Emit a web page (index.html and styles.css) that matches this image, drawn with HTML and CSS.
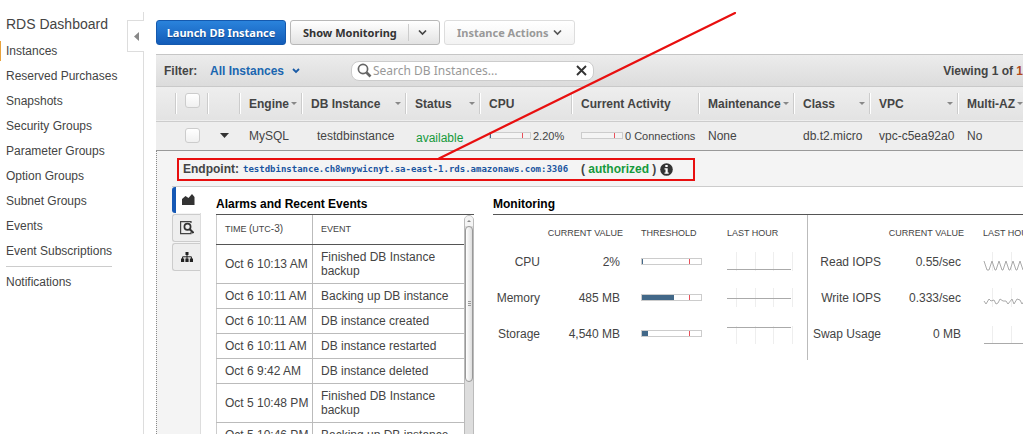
FILE: index.html
```html
<!DOCTYPE html>
<html lang="en">
<head>
<meta charset="utf-8">
<title>RDS Dashboard</title>
<link rel="stylesheet" href="styles.css">
</head>
<body>
<div class="app">
  <aside class="sidebar">
    <nav class="nav">
      <h1 class="nav-title">RDS Dashboard</h1>
      <a class="nav-link active" href="#">Instances</a>
      <a class="nav-link" href="#">Reserved Purchases</a>
      <a class="nav-link" href="#">Snapshots</a>
      <a class="nav-link" href="#">Security Groups</a>
      <a class="nav-link" href="#">Parameter Groups</a>
      <a class="nav-link" href="#">Option Groups</a>
      <a class="nav-link" href="#">Subnet Groups</a>
      <a class="nav-link" href="#">Events</a>
      <a class="nav-link" href="#">Event Subscriptions</a>
      <hr class="nav-rule">
      <a class="nav-link" href="#">Notifications</a>
    </nav>
    <div class="rail">
      <button class="collapse" type="button" aria-label="Collapse navigation"><svg width="5" height="9" viewBox="0 0 5 9"><path d="M5 0v9L0 4.500z" fill="#888"/></svg></button>
    </div>
  </aside>

  <main class="main">
    <div class="toolbar">
      <button class="btn primary" type="button">Launch DB Instance</button>
      <button class="btn split" type="button"><span>Show Monitoring</span><span class="split-arrow"><svg width="9" height="7" viewBox="0 0 9 7"><path d="M1 1.500l3.500 3.500L8 1.500" fill="none" stroke="#444" stroke-width="1.700"/></svg></span></button>
      <button class="btn disabled" type="button" disabled><span>Instance Actions</span><svg width="9" height="7" viewBox="0 0 9 7"><path d="M1 1.500l3.500 3.500L8 1.500" fill="none" stroke="#555" stroke-width="1.700"/></svg></button>
    </div>

    <div class="filterbar">
      <label class="filter-label" for="filter">Filter:</label>
      <div class="filter-pick">
        <select id="filter" class="filter-select"><option>All Instances</option></select>
        <svg width="8" height="6" viewBox="0 0 8 6"><path d="M1 1l3 3L7 1" fill="none" stroke="#1a5ba6" stroke-width="1.800"/></svg>
      </div>
      <div class="search">
        <svg width="15" height="15" viewBox="0 0 15 15"><circle cx="6" cy="6" r="4.600" fill="none" stroke="#666" stroke-width="1.700"/><path d="M9.500 9.500l4 4" stroke="#666" stroke-width="2.600"/></svg>
        <input class="search-input" type="text" placeholder="Search DB Instances..." aria-label="Search DB Instances">
        <button class="clear" type="button" aria-label="Clear search"><svg width="11" height="11" viewBox="0 0 11 11"><path d="M1 1l9 9M10 1l-9 9" stroke="#333" stroke-width="1.900"/></svg></button>
      </div>
      <div class="viewing">Viewing 1 of <span class="viewing-total">1</span></div>
    </div>

    <table class="grid">
      <colgroup><col class="w-edge"><col class="w-icon"><col class="w-icon"><col class="w-engine"><col class="w-name"><col class="w-status"><col class="w-cpu"><col class="w-activity"><col class="w-maint"><col class="w-class"><col class="w-vpc"><col class="w-az"></colgroup>
      <thead>
        <tr>
          <th><div class="head"></div></th>
          <th><div class="head tick"><input class="check" type="checkbox" aria-label="Select all"></div></th>
          <th><div class="head"></div></th>
          <th><div class="head">Engine<i class="sort"></i></div></th>
          <th><div class="head">DB Instance<i class="sort"></i></div></th>
          <th><div class="head">Status<i class="sort"></i></div></th>
          <th><div class="head">CPU</div></th>
          <th><div class="head">Current Activity</div></th>
          <th><div class="head">Maintenance<i class="sort"></i></div></th>
          <th><div class="head">Class<i class="sort"></i></div></th>
          <th><div class="head">VPC<i class="sort"></i></div></th>
          <th><div class="head last">Multi-AZ<i class="sort"></i></div></th>
        </tr>
      </thead>
      <tbody>
        <tr>
          <td></td>
          <td><input class="check" type="checkbox" aria-label="Select testdbinstance"></td>
          <td><button class="expand" type="button" aria-label="Toggle details"><svg width="9" height="5" viewBox="0 0 9 5"><path d="M0 0h9L4.500 5z" fill="#333"/></svg></button></td>
          <td>MySQL</td>
          <td class="name">testdbinstance</td>
          <td class="status">available</td>
          <td><div class="usage"><span class="meter small"><i class="fill" style="width:2%"></i></span><span>2.20%</span></div></td>
          <td><div class="usage"><span class="meter small"></span><span>0 Connections</span></div></td>
          <td>None</td>
          <td>db.t2.micro</td>
          <td>vpc-c5ea92a0</td>
          <td>No</td>
        </tr>
      </tbody>
    </table>

    <section class="detail">
      <div class="endpoint-row">
        <div class="endpoint">
          <b>Endpoint:</b>
          <code class="host">testdbinstance.ch8wnywicnyt.sa-east-1.rds.amazonaws.com:3306</code>
          <b class="auth">( <span class="green">authorized</span> )</b>
          <svg class="info" width="13" height="13" viewBox="0 0 13 13"><circle cx="6.500" cy="6.500" r="6.300" fill="#333"/><path d="M5.300 2h2.400v2H5.300zM4.500 5.200h3.200v4.300h1v1.300H4.500V9.500h1V6.500h-1z" fill="#fff"/></svg>
        </div>
      </div>
      <div class="detail-body">
        <div class="tabs">
          <button class="tab on" type="button" aria-label="Monitoring"><svg width="13" height="12" viewBox="0 0 13 12"><path d="M0 11V5l3.500-3 3 2L10 0l2.500 3v8z" fill="#333"/></svg></button>
          <button class="tab" type="button" aria-label="Details"><svg width="14" height="14" viewBox="0 0 14 14"><path d="M11 2V.600H.600v12H11V11" fill="none" stroke="#444" stroke-width="1.200"/><circle cx="7.500" cy="5.700" r="3.100" fill="none" stroke="#333" stroke-width="1.700"/><path d="M9.500 8l4 4" stroke="#333" stroke-width="2"/></svg></button>
          <button class="tab" type="button" aria-label="Topology"><svg width="12" height="10" viewBox="0 0 12 10"><path d="M4.500 0h3v3h-3zM0 6.500h3.200V10H0zM4.400 6.500h3.200V10H4.400zM8.800 6.500H12V10H8.800z" fill="#222"/><path d="M6 2v5M1.600 7V4.800h8.800V7" fill="none" stroke="#222"/></svg></button>
        </div>
        <div class="panel">
          <section class="events">
            <h2 class="heading">Alarms and Recent Events</h2>
            <div class="events-box">
              <table class="events-table">
                <colgroup><col class="w-time"><col></colgroup>
                <thead><tr><th>TIME <span class="utc">(</span>UTC<span class="utc">-3)</span></th><th>EVENT</th></tr></thead>
                <tbody>
                  <tr><td>Oct 6 10:13 AM</td><td>Finished DB Instance backup</td></tr>
                  <tr><td>Oct 6 10:11 AM</td><td>Backing up DB instance</td></tr>
                  <tr><td>Oct 6 10:11 AM</td><td>DB instance created</td></tr>
                  <tr><td>Oct 6 10:11 AM</td><td>DB instance restarted</td></tr>
                  <tr><td>Oct 6 9:42 AM</td><td>DB instance deleted</td></tr>
                  <tr><td>Oct 5 10:48 PM</td><td>Finished DB Instance backup</td></tr>
                  <tr><td>Oct 5 10:46 PM</td><td>Backing up DB instance</td></tr>
                </tbody>
              </table>
              <div class="scroll"><div class="scroll-up"><i></i></div><div class="thumb"><i></i><i></i><i></i></div></div>
            </div>
          </section>

          <section class="monitoring">
            <h2 class="heading">Monitoring</h2>
            <div class="metrics">
              <table class="metric-table first">
                <colgroup><col class="w-label"><col class="w-value"><col class="w-threshold"><col></colgroup>
                <thead><tr><th></th><th class="right">CURRENT VALUE</th><th class="threshold">THRESHOLD</th><th>LAST HOUR</th></tr></thead>
                <tbody>
                  <tr><td class="right">CPU</td><td class="right value">2%</td><td class="threshold"><span class="meter"><i class="fill" style="width:2%"></i></span></td>
                    <td><svg class="spark" width="67" height="20" viewBox="0 0 67 20"><path class="ticks" d="M9.500 0v19M28.500 0v19M46.500 0v19M65.500 0v19"/><path class="plot" d="M0 17.500h64"/></svg></td></tr>
                  <tr><td class="right">Memory</td><td class="right value">485 MB</td><td class="threshold"><span class="meter"><i class="fill" style="width:54%"></i></span></td>
                    <td><svg class="spark" width="67" height="20" viewBox="0 0 67 20"><path class="ticks" d="M9.500 0v19M28.500 0v19M46.500 0v19M65.500 0v19"/><path class="plot" d="M0 10.500h64"/></svg></td></tr>
                  <tr><td class="right">Storage</td><td class="right value">4,540 MB</td><td class="threshold"><span class="meter"><i class="fill" style="width:10%"></i></span></td>
                    <td><svg class="spark" width="67" height="20" viewBox="0 0 67 20"><path class="ticks" d="M9.500 2v18M28.500 2v18M46.500 2v18M65.500 2v18"/><path class="plot" d="M0 3.500h64"/></svg></td></tr>
                </tbody>
              </table>
              <table class="metric-table second">
                <colgroup><col class="w-label2"><col class="w-value"><col></colgroup>
                <thead><tr><th></th><th class="right">CURRENT VALUE</th><th class="hour">LAST HOUR</th></tr></thead>
                <tbody>
                  <tr><td class="right">Read IOPS</td><td class="right value">0.55/sec</td>
                    <td class="hour"><svg class="spark" width="67" height="20" viewBox="0 0 67 20"><path class="ticks" d="M9.500 0v19M28.500 0v19M46.500 0v19M65.500 0v19"/><path class="plot" d="M1 9l3 9h2l3-9 3 9h1l3-9 3 9h1l3-9 3 9h1l3-9 3 9h1l3-9 3 9h1l3-9 3 9h1l3-9 3 9h1l3-9 3 9"/></svg></td></tr>
                  <tr><td class="right">Write IOPS</td><td class="right value">0.333/sec</td>
                    <td class="hour"><svg class="spark" width="67" height="20" viewBox="0 0 67 20"><path class="ticks" d="M9.500 0v19M28.500 0v19M46.500 0v19M65.500 0v19"/><path class="plot" d="M1 13l2 3 3-5 2 2 3-1 2 4 2-1 2-4 3 2h3l2 3 4-5 2 5 3-5 3 1 2 4 3-4 3 2 3-1 2 3 3-4"/></svg></td></tr>
                  <tr><td class="right">Swap Usage</td><td class="right value">0 MB</td>
                    <td class="hour"><svg class="spark" width="67" height="20" viewBox="0 0 67 20"><path class="ticks" d="M9.500 2v17M28.500 2v17M46.500 2v17M65.500 2v17"/><path class="plot" d="M1 19.500h64"/></svg></td></tr>
                </tbody>
              </table>
            </div>
          </section>
        </div>
      </div>
    </section>

    <svg class="callout" width="300" height="148" viewBox="0 0 300 148"><path d="M298 1L2 146.500" stroke="#e80f0f" stroke-width="2.200" stroke-linecap="round"/></svg>
  </main>
</div>
</body>
</html>
```
FILE: styles.css
```css
* { box-sizing: border-box; }

body {
  margin: 0;
  background: #fff;
  color: #444;
  font: 12px/14px "Liberation Sans", Arial, sans-serif;
}

button { margin: 0; padding: 0; border: 0; background: none; font: inherit; color: inherit; }
svg { display: block; flex: none; }
table { border-collapse: collapse; border-spacing: 0; }
th, td { padding: 0; text-align: left; }

.app { display: flex; height: 100vh; overflow: hidden; }

/* Sidebar */
.sidebar { display: flex; flex: none; width: 144px; }
.nav { display: flex; flex: 1; flex-direction: column; padding-top: 14px; }
.nav-title { margin: 0 0 7px; padding-left: 6px; font-size: 14px; font-weight: 400; line-height: 20px; white-space: nowrap; }
.nav-link { margin-bottom: 5px; padding-left: 5px; border-left: 1px solid transparent; color: #444; line-height: 20px; text-decoration: none; white-space: nowrap; }
.nav-link.active { border-left-color: #e8a33d; }
.nav-rule { width: 106px; margin: 0 0 5px 6px; border: 0; border-top: 1px solid #ccc; }
.rail { display: flex; flex: none; flex-direction: column; width: 17px; padding-top: 12px; }
.rail::before { content: ""; height: 8px; border-right: 1px solid #ddd; }
.rail::after { content: ""; flex: 1; border-right: 1px solid #ddd; }
.collapse { display: flex; align-items: center; justify-content: center; height: 32px; border: 1px solid #ddd; border-right: 0; }

/* Main column */
.main { position: relative; display: flex; flex: 1; flex-direction: column; min-width: 0; margin-left: 12px; padding-top: 20px; overflow: hidden; }

.toolbar { display: flex; gap: 4px; }
.btn { display: flex; align-items: center; height: 25px; border: 1px solid #b8b8b8; border-radius: 3px; background: linear-gradient(#fff, #e3e3e3); color: #333; font: bold 11px/16px "Noto Sans", "Open Sans", sans-serif; white-space: nowrap; }
.btn.primary { justify-content: center; width: 130px; border-color: #1459ae; background: linear-gradient(#2a83dc, #135cb8); color: #fff; text-shadow: 0 1px 1px #0b4388; }
.btn.split { justify-content: space-between; width: 150px; padding-left: 12px; }
.split-arrow { display: flex; align-items: center; justify-content: center; width: 31px; height: 17px; padding-right: 4px; border-left: 1px solid #ccc; }
.btn.disabled { justify-content: space-between; width: 131px; padding: 0 12px; border-color: #ddd; background: linear-gradient(#fff, #f3f3f3); color: #999; }

.filterbar { display: flex; flex: none; align-items: center; height: 33px; margin-top: 9px; padding-left: 8px; border-top: 1px solid #c6c6c6; border-bottom: 1px solid #c9c9c9; background: linear-gradient(#ececec, #dcdcdc); white-space: nowrap; }
.filter-label { width: 46px; font-weight: 700; }
.filter-pick { display: flex; align-items: center; gap: 4px; width: 141px; color: #1a66b0; }
.filter-select { width: 78px; padding: 0; border: 0; background: none; color: inherit; font: bold 12px/16px "Liberation Sans", Arial, sans-serif; appearance: none; }
.search { display: flex; align-items: center; gap: 1px; width: 243px; height: 20px; padding: 0 6px 0 5px; border: 1px solid #ccc; border-radius: 8px; background: #fff; }
.search-input { flex: 1; min-width: 0; padding: 0; border: 0; outline: 0; background: none; color: #333; font: 12px/16px "Noto Sans", "Open Sans", sans-serif; }
.search-input::placeholder { color: #999; }
.viewing { flex: 1; min-width: 74px; text-align: right; font-weight: 700; }
.viewing-total { color: #b04a1c; }

/* Instance grid */
.grid { width: 969px; flex: none; align-self: flex-start; table-layout: fixed; white-space: nowrap; }
.w-edge { width: 21px; }
.w-icon { width: 32px; }
.w-engine { width: 62px; }
.w-name { width: 104px; }
.w-status { width: 74px; }
.w-cpu { width: 92px; }
.w-activity { width: 127px; }
.w-maint { width: 95px; }
.w-class { width: 76px; }
.w-vpc { width: 88px; }
.grid thead tr { height: 34px; border-bottom: 1px solid #ccc; background: linear-gradient(#eee, #e3e3e3); }
.head { display: flex; align-items: center; justify-content: space-between; height: 21px; padding: 0 5px 0 8px; border-right: 1px solid #fff; box-shadow: inset -1px 0 #ccc; }
.head.tick { justify-content: center; padding: 0; align-items: flex-start; }
.head.last { justify-content: flex-start; gap: 2px; }
.sort { border: 3px solid transparent; border-top-color: #888; border-bottom: 0; }
.check { display: block; width: 15px; height: 15px; margin: 0; border: 1px solid #ccc; border-radius: 3px; background: linear-gradient(#fff, #f0f0f0); appearance: none; }
.grid tbody tr { height: 29px; border-bottom: 1px solid #999; background: #eee; }
.grid td { padding-left: 8px; }
.grid .expand { display: block; padding: 3px; }
.grid .name { padding-left: 14px; }
.grid .status { padding: 5px 0 0 9px; color: #169a3c; }
.usage { display: flex; align-items: center; gap: 2px; font-size: 11px; }

.meter { position: relative; display: block; width: 61px; height: 7px; border: 1px solid #ccc; background: #fff; }
.meter::after { content: ""; position: absolute; top: 0; right: 11px; bottom: 0; width: 1px; background: #e8505a; }
.meter.small { width: 42px; background: #f4f4f4; }
.meter.small::after { right: 7px; }
.fill { display: block; min-width: 1px; height: 100%; background: #426888; }

/* Detail */
.detail { display: flex; flex: 1; flex-direction: column; min-height: 0; border-left: 1px dotted #888; background: #f4f4f4; }
.endpoint-row { flex: none; height: 36px; margin-left: 15px; padding: 7px 0 0 5px; border-bottom: 1px solid #ccc; }
.endpoint { display: flex; align-items: center; width: 518px; height: 23px; padding-left: 4px; border: 2px solid #e80f0f; white-space: nowrap; }
.host { width: 338px; margin-left: 4px; color: #1b55a0; font: bold 9px/14px "DejaVu Sans Mono", monospace; }
.green { color: #169a3c; }
.info { margin-left: 4px; }

.detail-body { display: flex; flex: 1; min-height: 0; padding-left: 15px; }
.tabs { display: flex; flex: none; flex-direction: column; gap: 1px; width: 29px; border-right: 1px solid #ddd; }
.tab { display: flex; align-items: center; justify-content: center; height: 28px; border: 1px solid #ccc; border-right: 0; border-radius: 3px 0 0 3px; background: #eee; }
.tab.on { height: 26px; margin-right: -1px; border: 0; border-left: 4px solid #1558b5; background: #fff; }

.panel { display: flex; flex: 1; gap: 19px; min-width: 0; padding: 10px 0 0 15px; background: #fff; }
.heading { margin: 0; padding-bottom: 3px; border-bottom: 1px solid #555; color: #000; font-size: 12px; line-height: 14px; }
.events { flex: none; width: 258px; }
.events-box { display: flex; }
.events-table { flex: 1; width: 248px; border-left: 1px solid #ccc; table-layout: fixed; }
.w-time { width: 96px; }
.events-table th { height: 30px; padding: 0 8px; border-bottom: 1px solid #555; font-size: 9px; font-weight: 400; }
.utc { font-size: 10px; }
.events-table td { padding: 5px 8px; border-bottom: 1px solid #bbb; }
.events-table td:first-child { padding-right: 0; white-space: nowrap; }
.events-table th + th, .events-table td + td { border-left: 1px solid #bbb; }
.scroll { display: flex; flex: none; flex-direction: column; width: 10px; border: 1px solid #bbb; border-radius: 5px; background: #ddd; }
.scroll-up { display: flex; align-items: center; justify-content: center; height: 10px; background: #f4f4f4; border-radius: 5px 5px 0 0; }
.scroll-up i { border: 2px solid transparent; border-top: 0; border-bottom-color: #888; }
.thumb { display: flex; flex-direction: column; align-items: center; justify-content: center; gap: 1px; height: 156px; border: 1px solid #999; border-radius: 5px; background: linear-gradient(90deg, #fff, #ddd); }
.thumb i { width: 3px; height: 1px; background: #999; }

.monitoring { flex: 1; min-width: 0; }
.metrics { display: flex; }
.metric-table { flex: none; table-layout: fixed; white-space: nowrap; }
.metric-table.first { width: 315px; border-right: 1px solid #bbb; }
.metric-table.second { width: 262px; }
.w-label { width: 47px; }
.w-value { width: 83px; }
.w-threshold { width: 104px; }
.w-label2 { width: 73px; }
.metric-table th { height: 29px; padding-top: 7px; font-size: 9px; font-weight: 400; }
.metric-table td { height: 36px; }
.metric-table tbody tr:last-child td { height: 44px; padding-bottom: 8px; }
.metric-table .right { text-align: right; }
.metric-table .value { padding-right: 3px; }
.metric-table .threshold { padding-left: 18px; }
.metric-table .hour { padding-left: 19px; }
.ticks { fill: none; stroke: #eee; }
.plot { fill: none; stroke: #aaa; }

/* Line that leads to the endpoint box */
.callout { position: absolute; top: 12px; left: 281px; pointer-events: none; }
```
